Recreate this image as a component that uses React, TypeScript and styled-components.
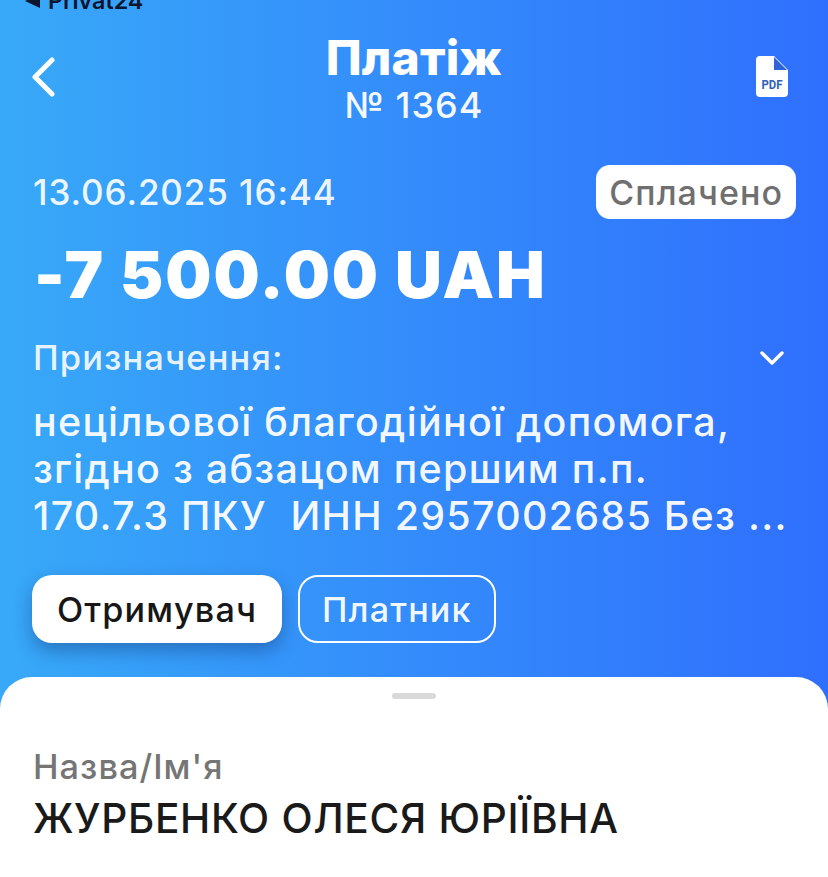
import React from 'react'
import styled, { createGlobalStyle } from 'styled-components'

const GlobalStyle = createGlobalStyle`
  html, body {
    margin: 0;
    padding: 0;
    background: #fff;
  }
  body {
    font-family: Inter, "Liberation Sans", sans-serif;
    overflow: hidden;
  }
`

const Page = styled.div`
  width: 828px;
  height: 877px;
  overflow: hidden;
  display: flex;
  flex-direction: column;
  background: linear-gradient(90deg, #38a9f8 0%, #2f6ffd 100%);
`

// status bar, cut off by the top of the screenshot
const StatusBar = styled.div`
  height: 12px;
  padding-left: 25px;
  display: flex;
  align-items: flex-end;
  gap: 8px;
  overflow: hidden;
  flex-shrink: 0;
`
const StatusText = styled.span`
  font-size: 23.3px;
  font-weight: 600;
  line-height: 26px;
  margin-bottom: -2px;
  color: #0b1530;
`

const Header = styled.div`
  display: grid;
  grid-template-columns: 1fr auto 1fr;
  align-items: start;
  padding: 19px 32px 0 32px;
`
const BackButton = styled.div`
  padding-top: 26px;
  display: flex;
`
const TitleBlock = styled.div`
  display: flex;
  flex-direction: column;
  align-items: center;
  color: #fff;
`
const Title = styled.div`
  font-size: 48px;
  font-weight: 800;
  line-height: 54px;
  letter-spacing: 0.2px;
`
const Number = styled.div`
  font-size: 36px;
  font-weight: 500;
  line-height: 40px;
  letter-spacing: 1px;
  opacity: 0.95;
`
const PdfButton = styled.div`
  justify-self: end;
  padding: 25px 8px 0 0;
  display: flex;
`

const Body = styled.div`
  padding: 40px 32px 0 33px;
  color: #fff;
`
const DateRow = styled.div`
  display: flex;
  justify-content: space-between;
  align-items: center;
`
const DateText = styled.div`
  font-size: 35px;
  font-weight: 500;
  letter-spacing: 0.9px;
  color: rgba(255, 255, 255, 0.92);
`
const StatusBadge = styled.div`
  background: #fff;
  border-radius: 14px;
  height: 54px;
  padding: 0 13px;
  display: flex;
  align-items: center;
  font-size: 34px;
  font-weight: 500;
  letter-spacing: 1.05px;
  color: #6f6f6f;
`
const Amount = styled.div`
  margin-top: 18px;
  font-size: 65px;
  font-weight: 900;
  line-height: 76px;
  letter-spacing: 1.95px;
  margin-left: 1px;
`
const PurposeHead = styled.div`
  margin-top: 25px;
  display: flex;
  justify-content: space-between;
  align-items: center;
  padding-right: 11px;
`
const PurposeLabel = styled.div`
  font-size: 34.5px;
  font-weight: 500;
  line-height: 40px;
  letter-spacing: 1.1px;
  color: rgba(255, 255, 255, 0.9);
`
const PurposeText = styled.div`
  margin-top: 21px;
  font-size: 39.4px;
  font-weight: 500;
  line-height: 47px;
  letter-spacing: 1.3px;
  white-space: pre;
  color: rgba(255, 255, 255, 0.95);
`
const Tabs = styled.div`
  margin-top: 35px;
  display: flex;
  gap: 16px;
  margin-left: -1px;
`
const Tab = styled.div<{ $active?: boolean }>`
  height: ${(p) => (p.$active ? '68px' : '64px')};
  padding: 0 ${(p) => (p.$active ? '25px' : '22px')};
  border-radius: 20px;
  display: flex;
  align-items: center;
  font-size: 34.2px;
  font-weight: 500;
  letter-spacing: 1.1px;
  background: ${(p) => (p.$active ? '#fff' : 'transparent')};
  color: ${(p) => (p.$active ? '#171717' : 'rgba(255,255,255,0.95)')};
  border: ${(p) => (p.$active ? 'none' : '2px solid #fff')};
  box-shadow: ${(p) => (p.$active ? '0 8px 18px rgba(20, 50, 110, 0.4)' : 'none')};
`

const Sheet = styled.div`
  margin-top: 34px;
  flex: 1;
  background: #fff;
  border-radius: 32px 32px 0 0;
  padding: 16px 33px 0 33px;
`
const Handle = styled.div`
  width: 44px;
  height: 6px;
  border-radius: 3px;
  background: #d9d9d9;
  margin: 0 auto;
`
const FieldLabel = styled.div`
  margin-top: 48px;
  font-size: 34.3px;
  font-weight: 500;
  line-height: 40px;
  letter-spacing: 1.05px;
  color: #757575;
`
const FieldValue = styled.div`
  margin-top: 9px;
  font-size: 40.6px;
  font-weight: 500;
  line-height: 46px;
  letter-spacing: 0.7px;
  color: #1a1a1a;
`

export default function App() {
  return (
    <Page>
      <GlobalStyle />
      <StatusBar>
        <svg width="15" height="12" viewBox="0 0 15 12">
          <path d="M15 -6 L15 8 L0 1 Z" fill="#0b1530" />
        </svg>
        <StatusText>Privat24</StatusText>
      </StatusBar>
      <Header>
        <BackButton>
          <svg width="26" height="40" viewBox="0 0 26 40" fill="none">
            <path d="M20 3 L3 20 L20 37" stroke="#fff" strokeWidth="5" strokeLinecap="round" strokeLinejoin="round" />
          </svg>
        </BackButton>
        <TitleBlock>
          <Title>Платіж</Title>
          <Number>№ 1364</Number>
        </TitleBlock>
        <PdfButton>
          <svg width="32" height="41" viewBox="0 0 32 41">
            <path d="M4 0 H18 L32 14 V37 Q32 41 28 41 H4 Q0 41 0 37 V4 Q0 0 4 0 Z" fill="#fff" />
            <path d="M18 1 L31 14 H18 Z" fill="#2f63d8" />
            <text x="16" y="33" textAnchor="middle" textLength="21" lengthAdjust="spacingAndGlyphs" fontFamily="Roboto, sans-serif" fontSize="13" fontWeight="700" fill="#2f63b8">PDF</text>
          </svg>
        </PdfButton>
      </Header>
      <Body>
        <DateRow>
          <DateText>13.06.2025 16:44</DateText>
          <StatusBadge>Сплачено</StatusBadge>
        </DateRow>
        <Amount>-7 500.00 UAH</Amount>
        <PurposeHead>
          <PurposeLabel>Призначення:</PurposeLabel>
          <svg width="26" height="16" viewBox="0 0 26 16" fill="none">
            <path d="M3 3 L13 13 L23 3" stroke="#fff" strokeWidth="3.4" strokeLinecap="round" strokeLinejoin="round" />
          </svg>
        </PurposeHead>
        <PurposeText>
          {'нецільової благодійної допомога,\nзгідно з абзацом першим п.п.\n170.7.3 ПКУ  ИНН 2957002685 Без ...'}
        </PurposeText>
        <Tabs>
          <Tab $active>Отримувач</Tab>
          <Tab>Платник</Tab>
        </Tabs>
      </Body>
      <Sheet>
        <Handle />
        <FieldLabel>Назва/Ім'я</FieldLabel>
        <FieldValue>ЖУРБЕНКО ОЛЕСЯ ЮРІЇВНА</FieldValue>
      </Sheet>
    </Page>
  )
}
